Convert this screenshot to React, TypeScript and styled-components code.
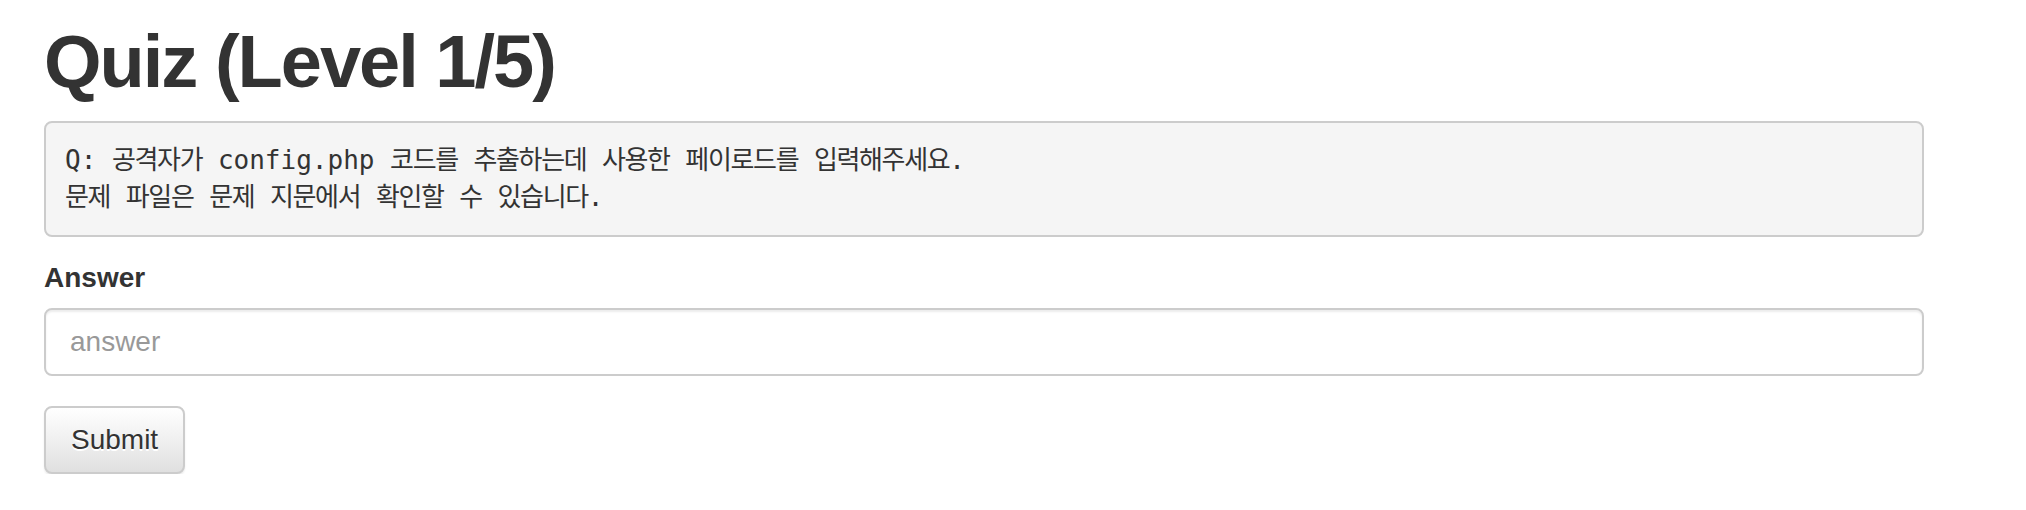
import React from "react";
import styled, { createGlobalStyle } from "styled-components";

const GlobalStyle = createGlobalStyle`
  html, body {
    margin: 0;
    padding: 0;
    background: #ffffff;
  }
  body {
    font-family: "Liberation Sans", Arial, Helvetica, sans-serif;
    color: #333333;
  }
  * { box-sizing: border-box; }
`;

const Page = styled.main`
  display: flex;
  flex-direction: column;
  width: 1880px;
  margin-left: 44px;
`;

const Title = styled.h1`
  margin: 22px 0 19px 0;
  font-family: "Liberation Sans", Arial, Helvetica, sans-serif;
  font-size: 74px;
  line-height: 80px;
  font-weight: 700;
  letter-spacing: -2px;
  color: #333333;
`;

const Question = styled.pre`
  margin: 0 0 21px 0;
  padding: 19px;
  font-family: "DejaVu Sans Mono", monospace;
  font-size: 26px;
  line-height: 37px;
  color: #333333;
  background: #f5f5f5;
  border: 2px solid #cccccc;
  border-radius: 8px;
  white-space: pre-wrap;
`;

const Ko = styled.span`
  font-family: "Noto Sans CJK KR", sans-serif;
  line-height: 1;
  letter-spacing: -1.35px;
`;

const FormGroup = styled.div`
  display: flex;
  flex-direction: column;
  margin-bottom: 30px;
`;

const Label = styled.label`
  display: block;
  margin-bottom: 10px;
  font-size: 28px;
  line-height: 40px;
  font-weight: 700;
  color: #333333;
`;

const Input = styled.input`
  display: block;
  width: 100%;
  height: 68px;
  padding: 12px 24px;
  font-family: "Liberation Sans", Arial, Helvetica, sans-serif;
  font-size: 28px;
  line-height: 40px;
  color: #555555;
  background: #ffffff;
  border: 2px solid #cccccc;
  border-radius: 8px;
  box-shadow: inset 0 2px 2px rgba(0, 0, 0, 0.075);
  outline: none;
  &::placeholder {
    color: #999999;
  }
`;

const Button = styled.button`
  align-self: flex-start;
  height: 68px;
  padding: 12px 25px;
  font-family: "Liberation Sans", Arial, Helvetica, sans-serif;
  font-size: 28px;
  line-height: 40px;
  color: #333333;
  text-shadow: 0 2px 0 #ffffff;
  background-image: linear-gradient(to bottom, #ffffff 0%, #e0e0e0 100%);
  border: 2px solid #cccccc;
  border-radius: 8px;
  box-shadow: inset 0 2px 0 rgba(255, 255, 255, 0.15), 0 2px 2px rgba(0, 0, 0, 0.075);
  cursor: pointer;
`;

const QUESTION_LINES = [
  "공격자가 config.php 코드를 추출하는데 사용한 페이로드를 입력해주세요.",
  "문제 파일은 문제 지문에서 확인할 수 있습니다.",
];

function renderRuns(text: string) {
  return text.split(/([\uAC00-\uD7A3]+)/).map((part, i) =>
    /[\uAC00-\uD7A3]/.test(part) ? <Ko key={i}>{part}</Ko> : <React.Fragment key={i}>{part}</React.Fragment>
  );
}

export default function App() {
  return (
    <>
      <GlobalStyle />
      <Page>
        <Title>Quiz (Level 1/5)</Title>
        <Question>
          {"Q: "}
          {renderRuns(QUESTION_LINES[0])}
          {"\n"}
          {renderRuns(QUESTION_LINES[1])}
        </Question>
        <form onSubmit={(e) => e.preventDefault()}>
          <FormGroup>
            <Label htmlFor="answer">Answer</Label>
            <Input id="answer" type="text" placeholder="answer" />
          </FormGroup>
          <Button type="submit">Submit</Button>
        </form>
      </Page>
    </>
  );
}
